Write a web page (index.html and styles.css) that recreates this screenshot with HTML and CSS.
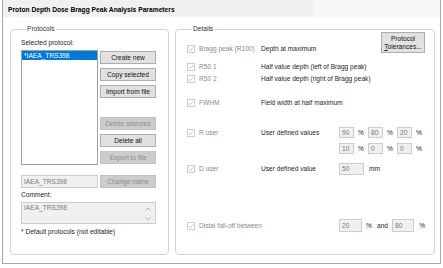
FILE: index.html
```html
<!DOCTYPE html>
<html lang="en">
<head>
    <meta charset="UTF-8">
    <title>Proton Depth Dose Bragg Peak Analysis Parameters</title>
    <link rel="stylesheet" href="styles.css">
</head>
<body>
<div class="frame">
    <div class="title">Proton Depth Dose Bragg Peak Analysis Parameters</div>
    <div class="content">

        <fieldset class="group protocols">
            <legend>Protocols</legend>
            <div class="caption first">Selected protocol:</div>
            <div class="list-row">
                <div class="listbox">
                    <div class="item selected">*IAEA_TRS398</div>
                </div>
                <div class="btn-col">
                    <button class="btn">Create new</button>
                    <button class="btn">Copy selected</button>
                    <button class="btn">Import from file</button>
                    <button class="btn off spaced" disabled>Delete selected</button>
                    <button class="btn">Delete all</button>
                    <button class="btn off" disabled>Export to file</button>
                </div>
            </div>
            <div class="name-row">
                <div class="field name">IAEA_TRS398</div>
                <button class="btn off" disabled>Change name</button>
            </div>
            <div class="caption comment-cap">Comment:</div>
            <div class="field comment">
                <span>IAEA_TRS398</span>
                <span class="spin">
                    <svg width="6" height="4" viewBox="0 0 6 4"><path d="M0.5 3.5 L3 1 L5.5 3.5" fill="none" stroke="#a8a8a8" stroke-width="0.8"/></svg>
                    <svg width="6" height="4" viewBox="0 0 6 4"><path d="M0.5 0.5 L3 3 L5.5 0.5" fill="none" stroke="#a8a8a8" stroke-width="0.8"/></svg>
                </span>
            </div>
            <div class="note">* Default protocols (not editable)</div>
        </fieldset>

        <fieldset class="group details">
            <legend>Details</legend>

            <div class="row top-row">
                <span class="chk"><svg class="box" width="8" height="8" viewBox="0 0 8 8"><rect x="0.5" y="0.5" width="7" height="7" fill="#fff" stroke="#cdcdcd"/><path d="M1.6 4.1 L3.2 5.7 L6.4 2.2" fill="none" stroke="#b4b4b4" stroke-width="0.8"/></svg>Bragg peak (R100)</span>
                <span class="desc">Depth at maximum</span>
                <button class="btn tol">Protocol<br><u>T</u>olerances...</button>
            </div>

            <div class="row r50a">
                <span class="chk"><svg class="box" width="8" height="8" viewBox="0 0 8 8"><rect x="0.5" y="0.5" width="7" height="7" fill="#fff" stroke="#cdcdcd"/><path d="M1.6 4.1 L3.2 5.7 L6.4 2.2" fill="none" stroke="#b4b4b4" stroke-width="0.8"/></svg>R50 1</span>
                <span class="desc wide">Half value depth (left of Bragg peak)</span>
            </div>

            <div class="row r50b">
                <span class="chk"><svg class="box" width="8" height="8" viewBox="0 0 8 8"><rect x="0.5" y="0.5" width="7" height="7" fill="#fff" stroke="#cdcdcd"/><path d="M1.6 4.1 L3.2 5.7 L6.4 2.2" fill="none" stroke="#b4b4b4" stroke-width="0.8"/></svg>R50 2</span>
                <span class="desc wide">Half value depth (right of Bragg peak)</span>
            </div>

            <div class="row fwhm">
                <span class="chk"><svg class="box" width="8" height="8" viewBox="0 0 8 8"><rect x="0.5" y="0.5" width="7" height="7" fill="#fff" stroke="#cdcdcd"/><path d="M1.6 4.1 L3.2 5.7 L6.4 2.2" fill="none" stroke="#b4b4b4" stroke-width="0.8"/></svg>FWHM</span>
                <span class="desc wide">Field width at half maximum</span>
            </div>

            <div class="row ruser">
                <span class="chk"><svg class="box" width="8" height="8" viewBox="0 0 8 8"><rect x="0.5" y="0.5" width="7" height="7" fill="#fff" stroke="#cdcdcd"/><path d="M1.6 4.1 L3.2 5.7 L6.4 2.2" fill="none" stroke="#b4b4b4" stroke-width="0.8"/></svg>R user</span>
                <span class="desc">User defined values</span>
                <div class="pct-grid">
                    <span class="num">90</span><span class="unit">%</span>
                    <span class="num">80</span><span class="unit">%</span>
                    <span class="num">20</span><span class="unit">%</span>
                    <span class="num">10</span><span class="unit">%</span>
                    <span class="num">0</span><span class="unit">%</span>
                    <span class="num">0</span><span class="unit">%</span>
                </div>
            </div>

            <div class="row duser">
                <span class="chk"><svg class="box" width="8" height="8" viewBox="0 0 8 8"><rect x="0.5" y="0.5" width="7" height="7" fill="#fff" stroke="#cdcdcd"/><path d="M1.6 4.1 L3.2 5.7 L6.4 2.2" fill="none" stroke="#b4b4b4" stroke-width="0.8"/></svg>D user</span>
                <span class="desc">User defined value</span>
                <span class="num mm-box">50</span><span class="mm">mm</span>
            </div>

            <div class="row distal">
                <span class="chk long"><svg class="box" width="8" height="8" viewBox="0 0 8 8"><rect x="0.5" y="0.5" width="7" height="7" fill="#fff" stroke="#cdcdcd"/><path d="M1.6 4.1 L3.2 5.7 L6.4 2.2" fill="none" stroke="#b4b4b4" stroke-width="0.8"/></svg>Distal fall-off between</span>
                <span class="num fall">20</span><span class="after">%</span>
                <span class="and">and</span>
                <span class="num fall2">80</span><span class="after last">%</span>
            </div>
        </fieldset>

    </div>
</div>
</body>
</html>
```

FILE: styles.css
```css
body {
    margin: 0;
    background: #fff;
    font: 6.6px "Liberation Sans", Arial, sans-serif;
    color: #1e1e1e;
}

.frame {
    display: flex;
    flex-direction: column;
    box-sizing: border-box;
    width: 439px;
    height: 264px;
    margin-left: 2px;
    border: 1px solid #a6a6a6;
    border-top: none;
}

.title {
    height: 17px;
    line-height: 20px;
    padding-left: 5px;
    font-weight: bold;
    font-size: 6.7px;
    color: #000;
    background: linear-gradient(90deg, #f0f0f0 0 310px, #f7f7f7 310px);
}

.content {
    flex: 1;
    display: flex;
    gap: 6px;
    padding: 8px 5px 8px 7px;
}

.group {
    margin: 0;
    padding: 0;
    min-width: 0;
    border: 1px solid #d3d3d3;
    border-radius: 4px;
}

.group legend {
    margin-left: 5px;
    padding: 0 1px;
    line-height: 8px;
    color: #333;
}

/* protocols */

.protocols {
    width: 159px;
    box-sizing: border-box;
    padding-left: 10px;
}

.caption {
    line-height: 8px;
}

.caption.first {
    margin-top: 6px;
}

.list-row {
    display: flex;
    gap: 2px;
    margin-top: 3px;
}

.listbox {
    box-sizing: border-box;
    width: 77px;
    height: 115px;
    border: 1px solid #a0a0a0;
    background: #fff;
}

.item {
    height: 9px;
    line-height: 9px;
    padding-left: 2px;
}

.item.selected {
    background: #0078d7;
    color: #fff;
}

.btn-col {
    display: flex;
    flex-direction: column;
    gap: 4px;
    margin-top: 1px;
}

.btn {
    box-sizing: border-box;
    width: 56px;
    height: 13px;
    padding: 0;
    font: inherit;
    color: #111;
    background: #e1e1e1;
    border: 1px solid #adadad;
}

.btn.off {
    background: #cccccc;
    border-color: #c2c2c2;
    color: #8c8c8c;
}

.btn.spaced {
    margin-top: 15px;
}

.name-row {
    display: flex;
    gap: 2px;
    margin-top: 10px;
}

.field {
    box-sizing: border-box;
    background: #f0f0f0;
    border: 1px solid #cccccc;
    color: #7a7a7a;
    padding-left: 2px;
}

.field.name {
    width: 77px;
    height: 13px;
    line-height: 11px;
}

.comment-cap {
    margin-top: 3px;
}

.comment {
    display: flex;
    justify-content: space-between;
    width: 135px;
    height: 22px;
    margin-top: 3px;
    line-height: 9px;
}

.spin {
    display: flex;
    flex-direction: column;
    gap: 6px;
    padding: 4px 4px 0 0;
}

.spin svg {
    display: block;
}

.note {
    margin-top: 4px;
    line-height: 8px;
}

/* details */

.details {
    width: 260px;
    box-sizing: border-box;
    padding: 0 9px 0 11px;
}

.row {
    display: flex;
    align-items: center;
    height: 10px;
    line-height: 10px;
}

.chk {
    display: flex;
    align-items: center;
    gap: 4px;
    width: 74px;
    flex: none;
    color: #8a8a8a;
    white-space: nowrap;
}

.chk .box {
    flex: none;
}

.chk.long {
    width: 152px;
}

.desc {
    width: 78px;
    flex: none;
    white-space: nowrap;
}

.desc.wide {
    width: auto;
}

.top-row {
    height: 21px;
    margin-top: -1px;
    align-items: flex-end;
}

.top-row .chk,
.top-row .desc {
    height: 8px;
    line-height: 8px;
}

.tol {
    width: 44px;
    height: 21px;
    margin-left: auto;
    line-height: 8px;
}

.r50a {
    margin-top: 9px;
}

.r50b {
    margin-top: 2px;
}

.fwhm {
    margin-top: 14px;
}

.ruser {
    margin-top: 19px;
    height: auto;
    align-items: flex-start;
    line-height: 11px;
}

.ruser .chk,
.ruser .desc {
    height: 11px;
}

.pct-grid {
    display: grid;
    grid-template-columns: repeat(3, 15px 14px);
    row-gap: 5px;
}

.num {
    box-sizing: border-box;
    height: 11px;
    line-height: 9px;
    padding-left: 2px;
    background: #f0f0f0;
    border: 1px solid #cccccc;
    color: #7a7a7a;
}

.unit {
    padding-left: 4px;
    line-height: 11px;
}

.duser {
    margin-top: 9px;
    height: 12px;
}

.mm-box {
    width: 25px;
    height: 12px;
    line-height: 10px;
}

.mm {
    margin-left: 5px;
}

.distal {
    margin-top: 44px;
    height: 13px;
}

.fall {
    width: 24px;
    height: 13px;
    line-height: 11px;
}

.fall2 {
    width: 23px;
    height: 13px;
    line-height: 11px;
}

.after {
    margin-left: 4px;
}

.after.last {
    margin-left: 5px;
}

.and {
    margin-left: 5px;
    margin-right: 4px;
}
```
